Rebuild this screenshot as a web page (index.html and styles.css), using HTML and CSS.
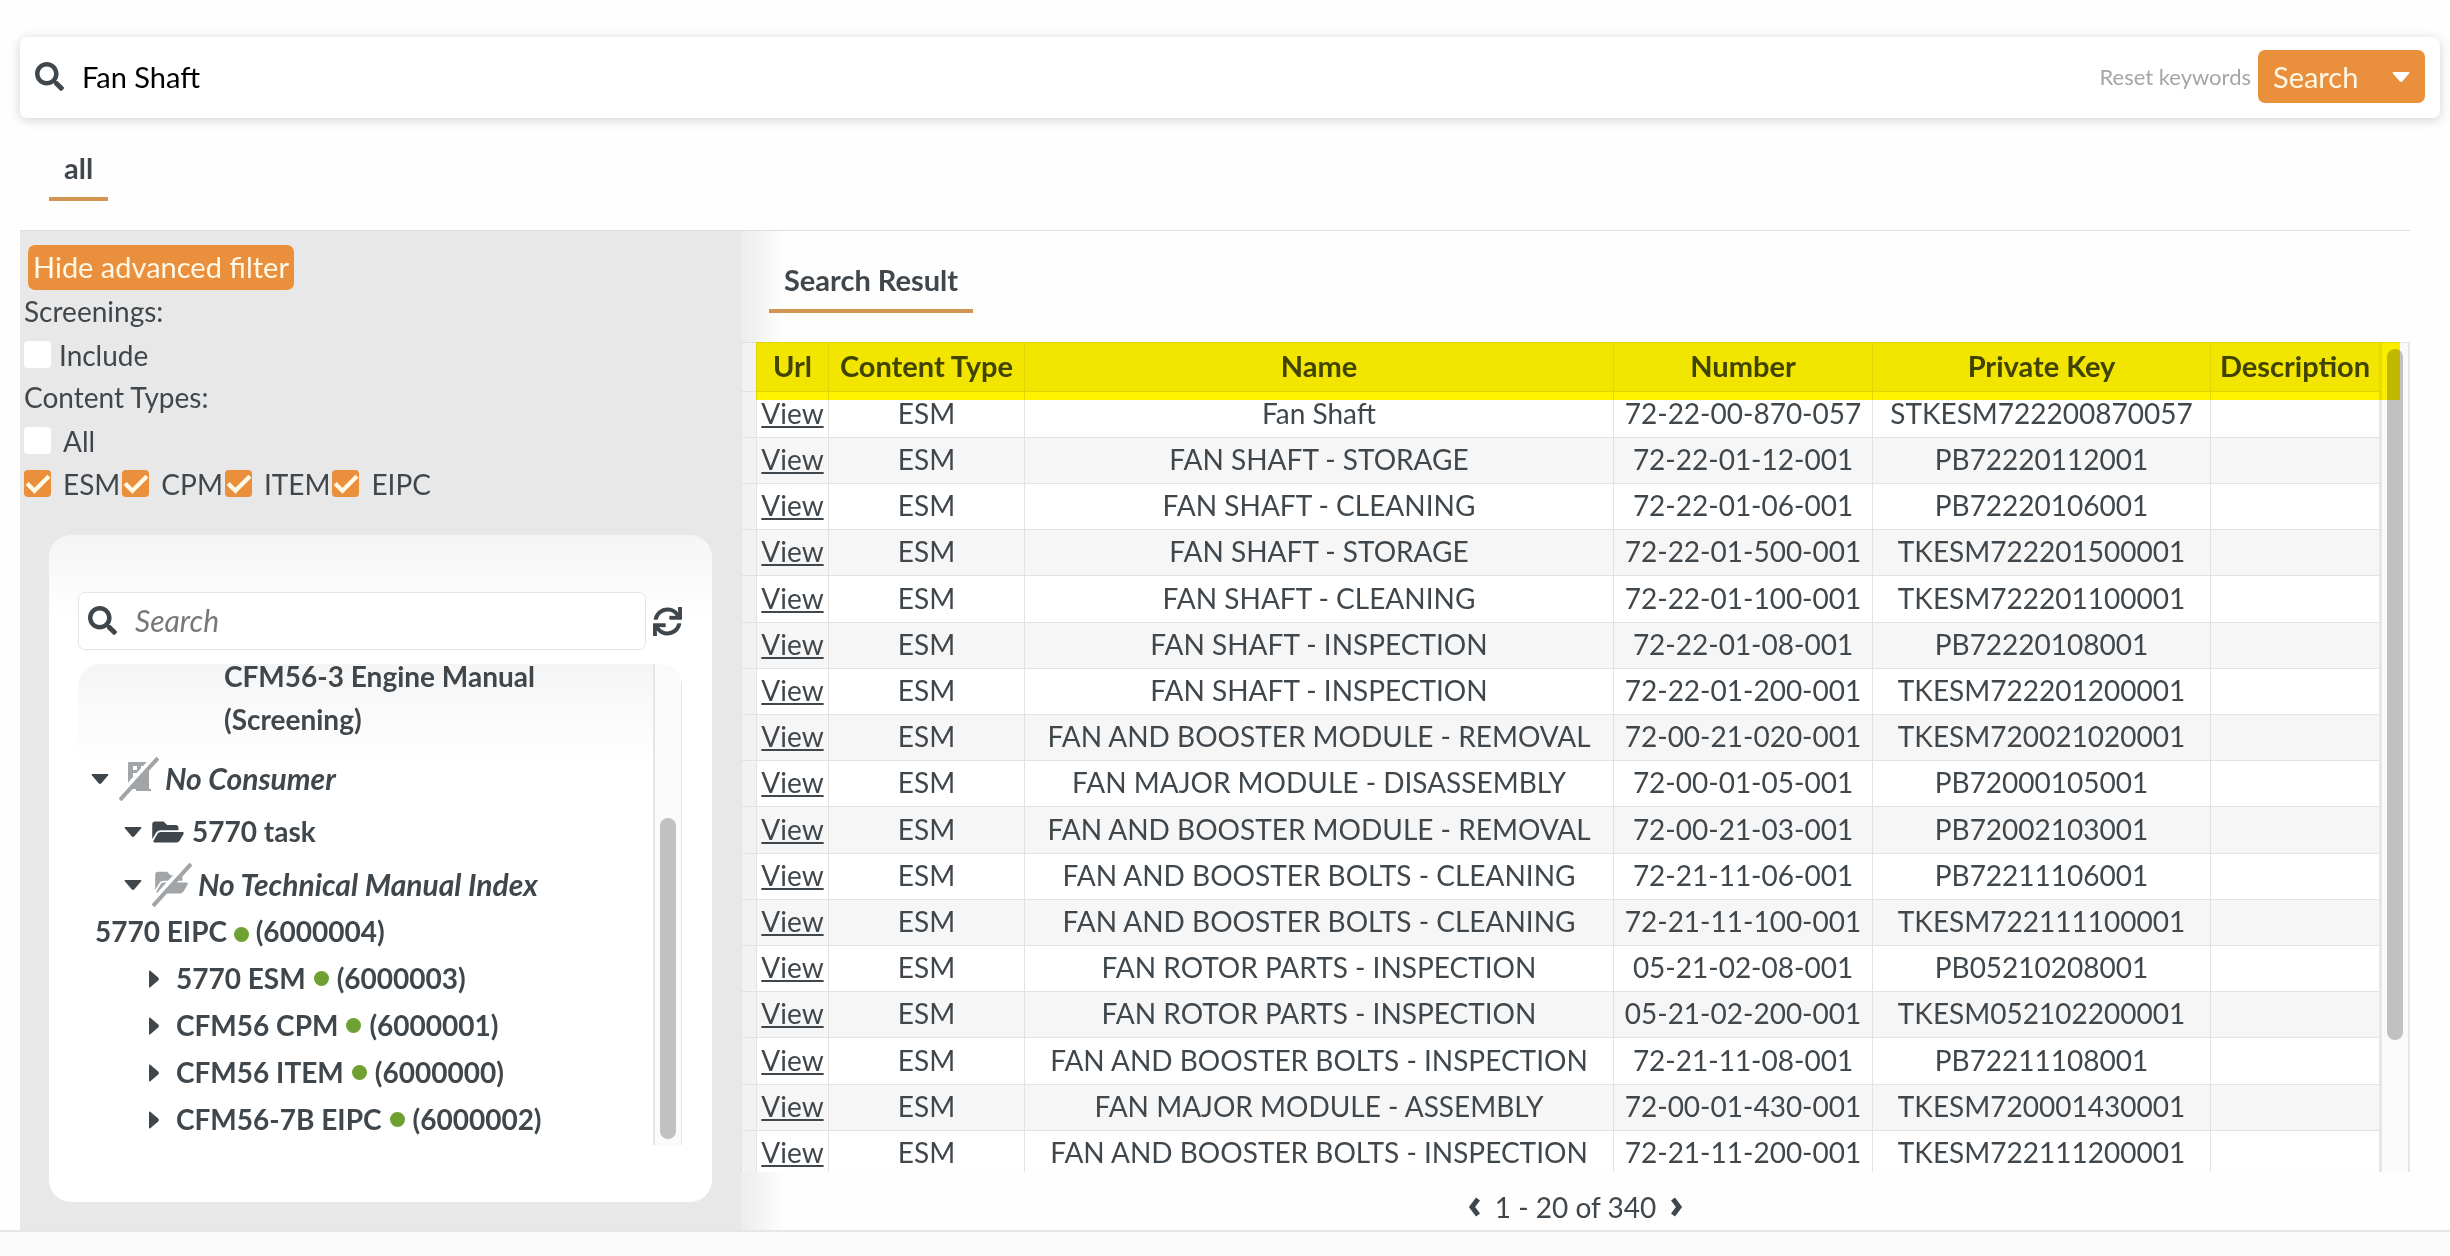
FILE: index.html
```html
<!DOCTYPE html>
<html lang="en">
<head>
    <meta charset="UTF-8">
    <meta name="viewport" content="width=device-width, initial-scale=1.0">
    <title>Search</title>
    <link rel="stylesheet" href="styles.css">
</head>
<body>
    <!-- shared icons -->
    <svg class="sprite" aria-hidden="true">
        <symbol id="icon-search" viewBox="0 0 512 512">
            <path d="M505 442.7L405.3 343c-4.5-4.5-10.6-7-17-7H372c27.6-35.3 44-79.7 44-128C416 93.1 322.9 0 208 0S0 93.1 0 208s93.1 208 208 208c48.3 0 92.7-16.4 128-44v16.3c0 6.4 2.5 12.5 7 17l99.7 99.7c9.4 9.4 24.6 9.4 33.9 0l28.3-28.3c9.4-9.4 9.4-24.6.1-34zM208 336c-70.7 0-128-57.2-128-128 0-70.7 57.2-128 128-128 70.7 0 128 57.2 128 128 0 70.7-57.2 128-128 128z"/>
        </symbol>
        <symbol id="icon-sync" viewBox="0 0 512 512">
            <path d="M440.65 12.57l4 82.77A247.16 247.16 0 0 0 255.83 8C134.73 8 33.91 94.92 12.29 209.82A12 12 0 0 0 24.09 224h49.05a12 12 0 0 0 11.67-9.26 175.91 175.91 0 0 1 317-56.94l-101.46-4.86a12 12 0 0 0-12.57 12v47.41a12 12 0 0 0 12 12H500a12 12 0 0 0 12-12V12a12 12 0 0 0-12-12h-47.37a12 12 0 0 0-11.98 12.57zM255.83 432a175.61 175.61 0 0 1-146-77.8l101.8 4.87a12 12 0 0 0 12.57-12v-47.4a12 12 0 0 0-12-12H12a12 12 0 0 0-12 12V500a12 12 0 0 0 12 12h47.35a12 12 0 0 0 12-12.6l-4.15-82.57A247.17 247.17 0 0 0 255.83 504c121.11 0 221.93-86.92 243.55-201.82a12 12 0 0 0-11.8-14.18h-49.05a12 12 0 0 0-11.67 9.26A175.86 175.86 0 0 1 255.83 432z"/>
        </symbol>
        <symbol id="icon-folder" viewBox="0 0 576 512">
            <path d="M572.694 292.093L500.27 416.248A63.997 63.997 0 0 1 444.989 448H45.025c-18.523 0-30.064-20.093-20.731-36.093l72.424-124.155A64 64 0 0 1 152 256h399.964c18.523 0 30.064 20.093 20.73 36.093zM152 224h328v-48c0-26.51-21.49-48-48-48H272l-64-64H48C21.49 64 0 85.49 0 112v278.046l69.077-118.418C86.214 242.25 117.989 224 152 224z"/>
        </symbol>
        <symbol id="icon-down" viewBox="0 0 18 10">
            <path d="M1.6 0h14.8q1.6 0 .8 1.3L10.4 9.2q-1.4 1.4-2.800 0L.8 1.3Q0 0 1.6 0z"/>
        </symbol>
        <symbol id="icon-right" viewBox="0 0 10 18">
            <path d="M0 1.6v14.8q0 1.6 1.3.8L9.2 10.4q1.4-1.4 0-2.8L1.3.8Q0 0 0 1.6z"/>
        </symbol>
    </svg>

    <form class="search-bar" onsubmit="return false">
        <label for="keywords" title="Keywords"><svg class="icon"><use href="#icon-search"/></svg></label>
        <input type="text" id="keywords" name="keywords" value="Fan Shaft">
        <button type="reset" class="reset">Reset keywords</button>
        <button type="submit" class="btn search-btn">Search <svg class="caret"><use href="#icon-down"/></svg></button>
    </form>

    <nav class="tabs">
        <a href="#all" class="tab">all</a>
    </nav>

    <main class="content">
        <aside class="sidebar">
            <div class="filters">
                <button type="button" class="btn filter-btn">Hide advanced filter</button>
                <div class="filter-row">Screenings:</div>
                <div class="filter-row include">
                    <label><input type="checkbox" name="include">Include</label>
                </div>
                <div class="filter-row">Content Types:</div>
                <div class="filter-row">
                    <label><input type="checkbox" name="all">All</label>
                </div>
                <div class="filter-row">
                    <label><input type="checkbox" name="esm" checked>ESM</label>
                    <label><input type="checkbox" name="cpm" checked>CPM</label>
                    <label><input type="checkbox" name="item" checked>ITEM</label>
                    <label><input type="checkbox" name="eipc" checked>EIPC</label>
                </div>
            </div>

            <section class="panel">
                <div class="tree-search">
                    <div class="tree-field">
                        <label for="treeSearch" title="Search"><svg class="icon"><use href="#icon-search"/></svg></label>
                        <input type="text" id="treeSearch" placeholder="Search">
                    </div>
                    <button type="button" class="refresh" title="Refresh"><svg class="icon"><use href="#icon-sync"/></svg></button>
                </div>
                <div class="tree">
                    <ul class="tree-list">
                        <li class="manual">CFM56-3 Engine Manual<br>(Screening)</li>
                        <li class="node empty">
                            <svg class="caret"><use href="#icon-down"/></svg>
                            <svg class="off-icon" viewBox="0 0 40 44">
                                <path fill-rule="evenodd" d="M10 5h18q2 0 2 2v25h2v2H17v-2h-8V6q0-1 1-1zM14 9v4h4V9zm8 0v4h4V9zm-8 7v4h4v-4z"/>
                                <path class="slash-gap" d="M-4 43L34 1"/>
                                <path class="slash" d="M1 43L39 1"/>
                            </svg>
                            No Consumer
                        </li>
                        <li class="node level-2">
                            <svg class="caret"><use href="#icon-down"/></svg>
                            <svg class="folder"><use href="#icon-folder"/></svg>
                            5770 task
                        </li>
                        <li class="node level-2 empty">
                            <svg class="caret"><use href="#icon-down"/></svg>
                            <svg class="off-icon" viewBox="0 0 40 44">
                                <use href="#icon-folder" x="3" y="5" width="33" height="29"/>
                                <path class="slash-gap" d="M-4 43L34 1"/>
                                <path class="slash" d="M1 43L39 1"/>
                            </svg>
                            No Technical Manual Index
                        </li>
                        <li class="loose">5770 EIPC <span class="dot"></span> (6000004)</li>
                        <li class="leaf"><svg class="arrow"><use href="#icon-right"/></svg>5770 ESM <span class="dot"></span> (6000003)</li>
                        <li class="leaf"><svg class="arrow"><use href="#icon-right"/></svg>CFM56 CPM <span class="dot"></span> (6000001)</li>
                        <li class="leaf"><svg class="arrow"><use href="#icon-right"/></svg>CFM56 ITEM <span class="dot"></span> (6000000)</li>
                        <li class="leaf"><svg class="arrow"><use href="#icon-right"/></svg>CFM56-7B EIPC <span class="dot"></span> (6000002)</li>
                    </ul>
                    <div class="track tree-track"><div class="thumb"></div></div>
                </div>
            </section>
        </aside>

        <section class="results">
            <div class="result-tabs">
                <a href="#result" class="tab">Search Result</a>
            </div>
            <div class="table-box">
                <div class="table-scroll">
                    <table>
                        <colgroup>
                            <col class="col-edge">
                            <col class="col-url">
                            <col class="col-type">
                            <col>
                            <col class="col-number">
                            <col class="col-key">
                            <col class="col-desc">
                        </colgroup>
                        <thead>
                            <tr><th></th><th>Url</th><th>Content Type</th><th>Name</th><th>Number</th><th>Private Key</th><th>Description</th></tr>
                        </thead>
                        <tbody id="rows"></tbody>
                    </table>
                </div>
                <div class="track table-track"><div class="thumb"></div></div>
                <div class="marker"></div>
            </div>
            <div class="pager">
                <button type="button" title="Previous"><svg viewBox="0 0 12 20"><path d="M10 2L4 10l6 8"/></svg></button>
                <span>1 - 20 of 340</span>
                <button type="button" title="Next"><svg viewBox="0 0 12 20"><path d="M2 2l6 8-6 8"/></svg></button>
            </div>
        </section>
    </main>
    <footer class="footer"></footer>

    <script>
        const results = [
            ['Fan Shaft', '72-22-00-870-057', 'STKESM722200870057'],
            ['FAN SHAFT - STORAGE', '72-22-01-12-001', 'PB72220112001'],
            ['FAN SHAFT - CLEANING', '72-22-01-06-001', 'PB72220106001'],
            ['FAN SHAFT - STORAGE', '72-22-01-500-001', 'TKESM722201500001'],
            ['FAN SHAFT - CLEANING', '72-22-01-100-001', 'TKESM722201100001'],
            ['FAN SHAFT - INSPECTION', '72-22-01-08-001', 'PB72220108001'],
            ['FAN SHAFT - INSPECTION', '72-22-01-200-001', 'TKESM722201200001'],
            ['FAN AND BOOSTER MODULE - REMOVAL', '72-00-21-020-001', 'TKESM720021020001'],
            ['FAN MAJOR MODULE - DISASSEMBLY', '72-00-01-05-001', 'PB72000105001'],
            ['FAN AND BOOSTER MODULE - REMOVAL', '72-00-21-03-001', 'PB72002103001'],
            ['FAN AND BOOSTER BOLTS - CLEANING', '72-21-11-06-001', 'PB72211106001'],
            ['FAN AND BOOSTER BOLTS - CLEANING', '72-21-11-100-001', 'TKESM722111100001'],
            ['FAN ROTOR PARTS - INSPECTION', '05-21-02-08-001', 'PB05210208001'],
            ['FAN ROTOR PARTS - INSPECTION', '05-21-02-200-001', 'TKESM052102200001'],
            ['FAN AND BOOSTER BOLTS - INSPECTION', '72-21-11-08-001', 'PB72211108001'],
            ['FAN MAJOR MODULE - ASSEMBLY', '72-00-01-430-001', 'TKESM720001430001'],
            ['FAN AND BOOSTER BOLTS - INSPECTION', '72-21-11-200-001', 'TKESM722111200001']
        ];

        document.getElementById('rows').innerHTML = results.map(item =>
            `<tr><td></td><td><a href="#view">View</a></td><td>ESM</td><td>${item[0]}</td><td>${item[1]}</td><td>${item[2]}</td><td></td></tr>`
        ).join('');
    </script>
</body>
</html>
```
FILE: styles.css
```css
* {
    box-sizing: border-box;
}
body {
    margin: 0;
    height: 100vh;
    display: flex;
    flex-direction: column;
    overflow: hidden;
    background-color: #fefefe;
    color: #40474c;
    font-family: Lato, "Liberation Sans", sans-serif;
    font-size: 28px;
    line-height: 43px;
}
button, input {
    font: inherit;
    color: inherit;
}
button {
    padding: 0;
    border: none;
    background: none;
    cursor: pointer;
}
svg {
    display: block;
    flex: none;
    fill: currentColor;
}
.sprite {
    position: absolute;
    width: 0;
    height: 0;
}
.icon {
    width: 29px;
    height: 29px;
}
.caret {
    width: 18px;
    height: 10px;
}
.btn {
    padding-bottom: 2px;
    background-color: #ea903c;
    color: #fff8e6;
    border-radius: 7px;
    font-size: 29px;
}

/* search bar */
.search-bar {
    display: flex;
    align-items: center;
    height: 81px;
    margin: 37px 10px 0 20px;
    padding: 0 15px 2px;
    background-color: white;
    border-radius: 7px;
    box-shadow: 0 2px 12px rgba(0,0,0,0.18);
}
.search-bar input {
    flex: 1;
    min-width: 0;
    margin-left: 18px;
    padding: 0;
    border: none;
    outline: none;
    background: none;
    color: black;
    font-size: 29px;
}
.reset {
    font-size: 22px;
    color: #a3a6a8;
}
.search-btn {
    display: flex;
    align-items: center;
    justify-content: space-between;
    width: 167px;
    height: 53px;
    margin-left: 7px;
    padding: 0 15px;
}
.search-btn .caret {
    color: white;
}

/* tabs */
.tabs {
    height: 112px;
    padding: 28px 29px 0;
}
.tabs .tab {
    margin-left: 20px;
}
.tab {
    display: inline-block;
    padding: 0 15px 8px;
    border-bottom: 4px solid #d39551;
    color: inherit;
    font-size: 29px;
    font-weight: bold;
    text-decoration: none;
}

/* main area */
.content {
    flex: 1;
    min-height: 0;
    display: flex;
    margin: 0 40px 0 20px;
    border-top: 1px solid #dedede;
}
.footer {
    height: 26px;
    border-top: 2px solid #e6e6e6;
    background-color: #fafafa;
}

/* filters */
.sidebar {
    flex: none;
    width: 721px;
    display: flex;
    flex-direction: column;
    padding-bottom: 28px;
    background-color: #e8e8e8;
}
.filters {
    padding: 14px 4px 1px;
}
.filter-btn {
    display: block;
    height: 45px;
    margin-left: 4px;
    padding: 0 5px 2px;
}
.filter-row {
    display: flex;
    gap: 2px;
    height: 43px;
    line-height: 42px;
}
.filter-row label {
    display: flex;
    align-items: center;
    gap: 12px;
}
.include label {
    gap: 8px;
}
input[type="checkbox"] {
    appearance: none;
    width: 27px;
    height: 27px;
    margin: 0;
    border-radius: 4px;
    background-color: white;
}
input[type="checkbox"]:checked {
    background: #ea903c url("data:image/svg+xml,%3Csvg xmlns='http://www.w3.org/2000/svg' viewBox='0 0 26 26'%3E%3Cpath d='M3 13l7 7L24 6' fill='none' stroke='%23fffbe8' stroke-width='4'/%3E%3C/svg%3E");
}

/* tree panel */
.panel {
    flex: 1;
    min-height: 0;
    display: flex;
    flex-direction: column;
    margin: 29px 29px 0;
    padding: 57px 30px 57px 29px;
    border-radius: 22px;
    background: linear-gradient(#f5f5f5, white 86px);
}
.tree-search {
    display: flex;
    align-items: center;
    gap: 7px;
    margin-bottom: 14px;
}
.tree-field {
    flex: 1;
    display: flex;
    align-items: center;
    height: 58px;
    padding: 0 9px 1px;
    border: 1px solid #e4e4e4;
    border-radius: 7px;
    background-color: white;
}
.tree-field input {
    flex: 1;
    min-width: 0;
    margin-left: 18px;
    padding: 0;
    border: none;
    outline: none;
    background: none;
    font-size: 30px;
}
.tree-field input::placeholder {
    color: #777;
    font-style: italic;
}
.tree {
    flex: 1;
    min-height: 0;
    display: flex;
    overflow: hidden;
    border-radius: 22px 22px 0 0;
    background: linear-gradient(#f5f5f5, white 96px);
}
.tree-list {
    flex: 1;
    margin: -9px 0 0;
    padding: 0;
    list-style: none;
    font-weight: bold;
}
.manual {
    padding: 0 0 11px 146px;
}
.node {
    display: flex;
    align-items: center;
    height: 53px;
    padding-left: 13px;
}
.node.level-2 {
    padding-left: 46px;
}
.node .caret {
    margin-right: 10px;
}
.folder {
    width: 32px;
    height: 28px;
    margin-right: 8px;
}
.empty {
    font-size: 30px;
    font-style: italic;
}
.off-icon {
    width: 40px;
    height: 44px;
    margin-right: 6px;
    fill: #a2a5a7;
}
.slash {
    stroke: #a2a5a7;
    stroke-width: 4;
}
.slash-gap {
    stroke: white;
    stroke-width: 4;
}
.loose {
    height: 44px;
    padding-left: 17px;
    line-height: 40px;
}
.leaf {
    display: flex;
    align-items: center;
    gap: 8px;
    height: 47px;
    padding-left: 71px;
}
.arrow {
    width: 10px;
    height: 18px;
    margin-right: 9px;
}
.dot {
    display: inline-block;
    width: 15px;
    height: 15px;
    border-radius: 50%;
    background-color: #6ea032;
}

/* scroll bars */
.track {
    flex: none;
    border: solid #e6e6e6;
    background-color: #fafafa;
}
.thumb {
    width: 16px;
    margin: 0 auto;
    border-radius: 8px;
    background-color: #c1c1c1;
}
.tree-track {
    width: 29px;
    border-width: 0 1px 0 2px;
    padding: 154px 0 6px;
}
.tree-track .thumb {
    height: 100%;
}
.table-track {
    width: 31px;
    border-width: 1px 2px 0 3px;
    padding-top: 6px;
}
.table-track .thumb {
    height: 84%;
}

/* results */
.results {
    flex: 1;
    min-width: 0;
    display: flex;
    flex-direction: column;
    background: linear-gradient(to right, #ececec, #fefefe 42px);
}
.result-tabs {
    height: 111px;
    padding: 27px 28px 0;
}
.table-box {
    position: relative;
    flex: 1;
    min-height: 0;
    display: flex;
}
.table-scroll {
    flex: 1;
    overflow: hidden;
    border-top: 1px solid #dedede;
    background-color: white;
}
table {
    width: 100%;
    table-layout: fixed;
    border-collapse: separate;
    border-spacing: 0;
    text-align: center;
}
th, td {
    height: 46px;
    padding: 0 0 3px;
    border-left: 1px solid #e2e2e2;
    border-bottom: 1px solid #e2e2e2;
    line-height: 36px;
    white-space: nowrap;
}
th {
    height: 49px;
    background-color: #f2f2f2;
    font-size: 29px;
}
tbody tr:nth-child(even) {
    background-color: #f6f6f6;
}
tbody tr:nth-child(5n) td {
    height: 47px;
}
tr td:first-child {
    background-color: #f2f2f2;
}
td a {
    color: inherit;
}
.col-edge {
    width: 15px;
}
.col-url {
    width: 72px;
}
.col-type {
    width: 196px;
}
.col-number {
    width: 259px;
}
.col-key {
    width: 338px;
}
.col-desc {
    width: 169px;
}
/* highlighter stroke over the table header */
.marker {
    position: absolute;
    top: 0;
    left: 15px;
    right: 10px;
    height: 58px;
    background-color: #fff200;
    mix-blend-mode: multiply;
}
.pager {
    display: flex;
    align-items: center;
    justify-content: center;
    gap: 15px;
    height: 58px;
    padding-top: 12px;
}
.pager svg {
    width: 12px;
    height: 20px;
    fill: none;
    stroke: currentColor;
    stroke-width: 5;
}
```
